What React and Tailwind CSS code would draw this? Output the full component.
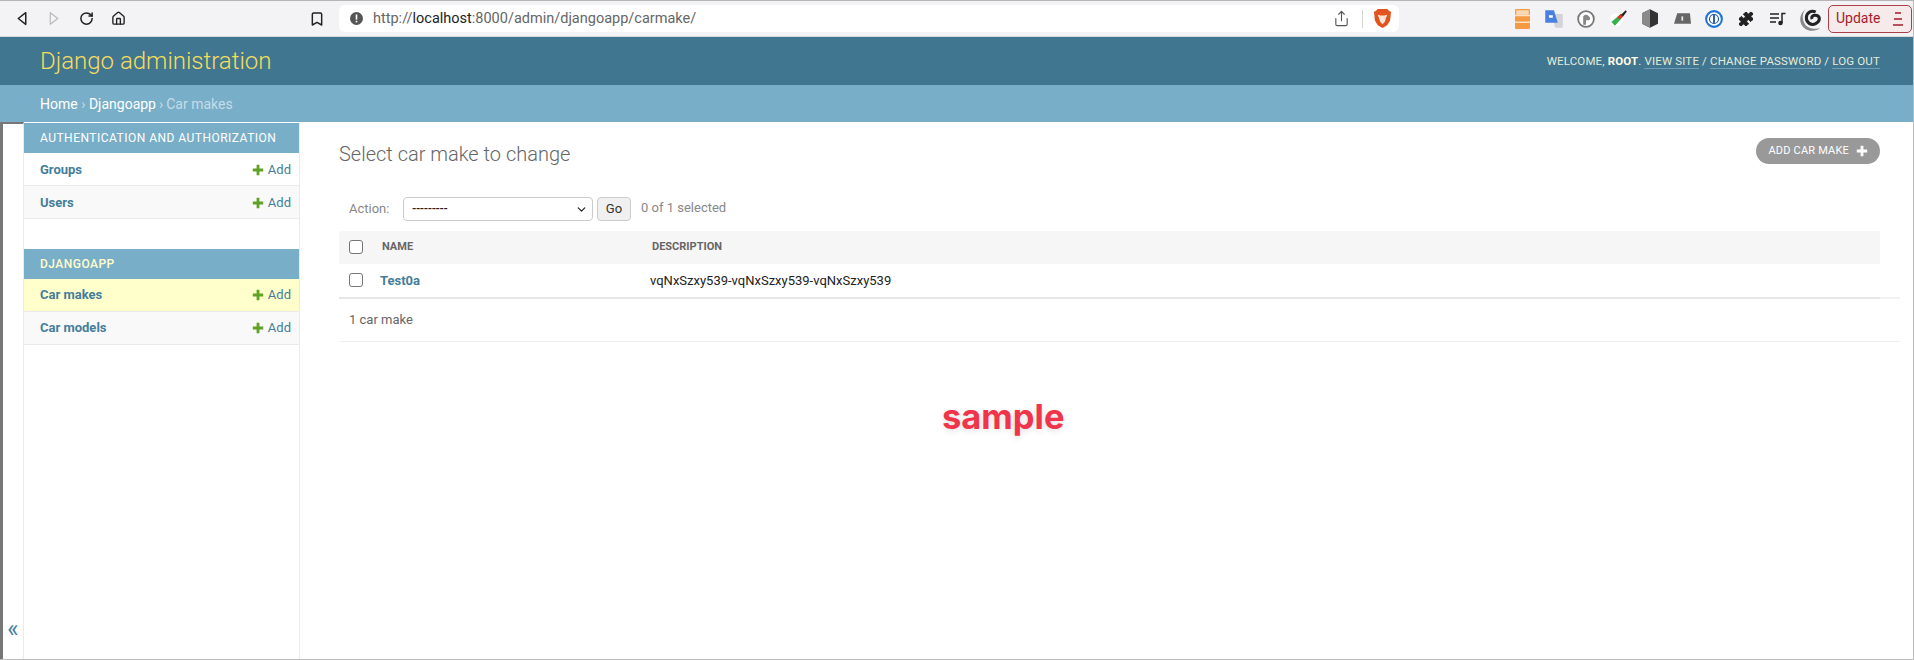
import { ChevronDown, Puzzle, Home, RotateCw, Bookmark, Share } from 'lucide-react';

const sections = [
  {
    title: 'Authentication and authorization',
    titleClass: 'text-white',
    rows: [
      { name: 'Groups', rowClass: 'bg-white pt-px' },
      { name: 'Users', rowClass: 'bg-[#f9f9f9] pt-px' },
    ],
  },
  {
    title: 'Djangoapp',
    titleClass: 'text-[#ffffcc] font-medium',
    rows: [
      { name: 'Car makes', rowClass: 'bg-[#ffffcc]' },
      { name: 'Car models', rowClass: 'bg-[#f9f9f9]' },
    ],
  },
];

const PlusIcon = ({ className }) => (
  <svg viewBox="0 0 12 12" className={className} fill="currentColor">
    <path d="M4.6 0.8h2.8v3.8h3.8v2.8H7.4v3.8H4.6V7.4H0.8V4.6h3.8z" />
  </svg>
);

const ToolbarSlot = ({ children }) => (
  <div className="flex h-[24px] w-[32px] shrink-0 items-center justify-center">{children}</div>
);

const BrowserBar = () => (
  <div className="flex h-[37px] shrink-0 items-center border-t border-b border-t-[#b5b5b5] border-b-[#d9d9d9] bg-[#f3f3f5] pl-[6px]">
    <ToolbarSlot>
      <svg viewBox="0 0 14 18" className="h-[15px] w-[12px]" fill="none" stroke="#222" strokeWidth="1.8" strokeLinejoin="round">
        <path d="M11.5 2L2.5 9l9 7z" />
      </svg>
    </ToolbarSlot>
    <ToolbarSlot>
      <svg viewBox="0 0 14 18" className="h-[15px] w-[12px]" fill="none" stroke="#b9b9b9" strokeWidth="1.4" strokeLinejoin="round">
        <path d="M2.5 2l9 7-9 7z" />
      </svg>
    </ToolbarSlot>
    <ToolbarSlot>
      <RotateCw className="h-[15px] w-[15px] text-[#222]" strokeWidth={2.4} />
    </ToolbarSlot>
    <ToolbarSlot>
      <Home className="h-[15px] w-[15px] text-[#222]" strokeWidth={2.2} />
    </ToolbarSlot>
    <div className="ml-[167px] flex w-[32px] justify-center">
      <Bookmark className="h-[16px] w-[16px] text-[#222]" strokeWidth={2.2} />
    </div>
    <div className="ml-[6px] flex h-[27px] w-[1060px] items-center rounded-[6px] bg-white pl-[11px]">
      <svg viewBox="0 0 16 16" className="h-[13px] w-[13px] shrink-0">
        <circle cx="8" cy="8" r="8" fill="#555" />
        <rect x="7" y="3" width="2" height="6.4" fill="#fff" />
        <rect x="7" y="10.8" width="2" height="2" fill="#fff" />
      </svg>
      <span className="ml-[10px] text-[14.5px] text-[#666]">
        http://<span className="text-[#222]">localhost</span>:8000/admin/djangoapp/carmake/
      </span>
      <div className="ml-auto flex items-center pr-[7px]">
        <Share className="h-[17px] w-[17px] text-[#555]" strokeWidth={1.6} />
        <div className="ml-[12px] h-[18px] w-px bg-[#d5d5d5]" />
        <svg viewBox="0 0 20 22" className="ml-[10px] h-[21px] w-[19px]">
          <path d="M5 1h10l2 2 2 1-1 9-3 5-5 3-5-3-3-5-1-9 2-1z" fill="#e2541f" />
          <path d="M5 7l3 .8h4l3-.8-1.500 4-1 3.500L10 17l-2.500-2.500-1-3.500z" fill="#fbe3d6" />
        </svg>
      </div>
    </div>
    <div className="ml-[107px] flex items-center">
      <ToolbarSlot>
        <svg viewBox="0 0 12 16" className="h-[20px] w-[15px]">
          <rect width="12" height="16" rx="1" fill="#f59a42" />
          <rect x="1" y="1" width="10" height="3.600" fill="#fcd9b6" />
          <rect y="4.600" width="12" height="1.200" fill="#ffe2c4" />
          <rect y="10" width="12" height="1.200" fill="#ffe2c4" />
        </svg>
      </ToolbarSlot>
      <ToolbarSlot>
        <svg viewBox="0 0 16 16" className="h-[22px] w-[20px]">
          <path d="M6 4h9v11H9z" fill="#d4d4d8" />
          <path d="M1 1h7l3 10H1z" fill="#4a80e0" />
          <rect x="4" y="5" width="3" height="2" fill="#fff" />
        </svg>
      </ToolbarSlot>
      <ToolbarSlot>
        <svg viewBox="0 0 16 16" className="h-[18px] w-[18px]">
          <circle cx="8" cy="8" r="7" fill="#fff" stroke="#777" strokeWidth="1.600" />
          <path d="M5.500 13V5.500Q8 3 10.500 5.500t0 3.500H8v4z" fill="#888" />
        </svg>
      </ToolbarSlot>
      <ToolbarSlot>
        <svg viewBox="0 0 16 16" className="h-[19px] w-[19px]">
          <circle cx="6" cy="9" r="5.500" fill="#fff" />
          <path d="M2 11L10 4l2 2-7 8z" fill="#35b04a" />
          <path d="M7 7l3-3 2 2-3 3z" fill="#d8352a" />
          <path d="M10 5l4-4 1 1-3 4z" fill="#222" />
        </svg>
      </ToolbarSlot>
      <ToolbarSlot>
        <svg viewBox="0 0 14 16" className="h-[19px] w-[16px]">
          <path d="M7 0l7 3.500v9L7 16 0 12.500v-9z" fill="#333" />
          <path d="M7 0L0 3.500v9L7 16z" fill="#8a8a8a" />
        </svg>
      </ToolbarSlot>
      <ToolbarSlot>
        <svg viewBox="0 0 16 10" className="h-[11px] w-[17px]">
          <path d="M3 0h12l1 10H0z" fill="#666" />
          <rect x="7" y="3" width="1.600" height="4" fill="#eee" />
        </svg>
      </ToolbarSlot>
      <ToolbarSlot>
        <svg viewBox="0 0 16 16" className="h-[18px] w-[18px]">
          <circle cx="8" cy="8" r="7" fill="#fff" stroke="#1a73d8" strokeWidth="1.800" />
          <circle cx="8" cy="8" r="4" fill="none" stroke="#1a4f9c" strokeWidth="1" />
          <rect x="7.200" y="4.500" width="1.600" height="7" fill="#1a4f9c" />
        </svg>
      </ToolbarSlot>
      <ToolbarSlot>
        <Puzzle className="h-[16px] w-[16px] fill-[#222] text-[#222]" strokeWidth={1.5} />
      </ToolbarSlot>
      <ToolbarSlot>
        <svg viewBox="0 0 16 14" className="h-[14px] w-[16px]" fill="none" stroke="#222" strokeWidth="1.500">
          <path d="M0 2h9M0 6h9M0 10h6" />
          <path d="M12 11V1.500h3.500" />
          <circle cx="10.500" cy="11" r="1.500" fill="#222" />
        </svg>
      </ToolbarSlot>
      <div className="flex h-[24px] w-[34px] shrink-0 items-center justify-center">
        <svg viewBox="0 0 24 24" className="h-[28px] w-[28px] shrink-0" fill="none">
          <path d="M8 3C1 8 1 17 8 21c4 2 9 1 12-1-6 1-12 0-14-5C4 10 5 6 8 3z" fill="#888" />
          <path d="M16 6c-4-2-8 1-8 5s4 7 8 5 4-6 1-7-5 1-4 3" stroke="#222" strokeWidth="2.600" />
        </svg>
      </div>
    </div>
    <div className="flex h-[28px] w-[84px] items-center justify-between rounded-[5px] border border-[#a8404a] bg-[#f7eaea] pr-[8px] pl-[7px]">
      <span className="text-[14px] text-[#a51d2d]">Update</span>
      <svg viewBox="0 0 10 14" className="h-[14px] w-[10px]" stroke="#a51d2d" strokeWidth="1.500">
        <path d="M2 1h6M1 7h8M0 13h10" />
      </svg>
    </div>
  </div>
);

const Sidebar = () => (
  <div className="flex w-[300px] shrink-0">
    <div className="flex w-[24px] shrink-0 items-end border-t-2 border-r border-l-[3px] border-t-[#777] border-r-[#eaeaea] border-l-[#777] pb-[18px]">
      <span className="w-full text-center text-[24px] leading-[24px] text-[#447e9b]">«</span>
    </div>
    <div className="w-[276px] border-r border-[#eaeaea] pt-px">
      {sections.map((section) => (
        <div key={section.title} className="mb-[30px]">
          <div className={`flex h-[30px] items-center bg-[#79aec8] pl-[16px] text-[12px] tracking-[0.48px] uppercase ${section.titleClass}`}>
            {section.title}
          </div>
          {section.rows.map((row) => (
            <div key={row.name} className={`flex h-[33px] items-center justify-between border-b border-[#eaeaea] pr-[8px] pl-[16px] text-[13px] ${row.rowClass}`}>
              <span className="font-bold text-[#447e9b]">{row.name}</span>
              <span className="flex items-center gap-[4px] text-[#447e9b]">
                <PlusIcon className="h-[12px] w-[12px] text-[#5fa225]" />
                Add
              </span>
            </div>
          ))}
        </div>
      ))}
    </div>
  </div>
);

const ChangeList = () => (
  <div className="relative min-w-0 flex-1 pt-[20px] pr-[13px] pl-[39px]">
    <div className="flex w-[1541px] items-start justify-between">
      <h1 className="text-[20px] leading-[24px] font-light text-[#666]">Select car make to change</h1>
      <div className="mt-[-4px] flex h-[26px] items-center gap-[7px] rounded-[13px] bg-[#999] pr-[12px] pl-[12px] text-[11px] tracking-[0.2px] text-white uppercase">
        Add car make
        <PlusIcon className="h-[12px] w-[12px]" />
      </div>
    </div>
    <div className="mt-[31px] flex h-[24px] items-center pl-[10px] text-[13px] text-[#666]">
      <span className="w-[54px] text-[#888]">Action:</span>
      <div className="flex h-[24px] w-[190px] items-center justify-between rounded-[4px] border border-[#ccc] bg-white pr-[4px] pl-[8px] text-[#222]">
        <span className="text-[11px] font-bold tracking-[-0.4px]">---------</span>
        <ChevronDown className="h-[13px] w-[13px] text-[#222]" strokeWidth={2.2} />
      </div>
      <div className="ml-[4px] flex h-[24px] w-[34px] items-center justify-center rounded-[4px] border border-[#ccc] bg-[#f0f0f0] text-[13px] text-[#333]">Go</div>
      <span className="ml-[10px] mb-[2px] text-[#888]">0 of 1 selected</span>
    </div>
    <div className="mt-[10px] flex h-[33px] w-[1541px] items-center bg-[#f6f6f6] text-[11px] font-bold text-[#666] uppercase">
      <div className="mb-[2px] ml-[10px] h-[14px] w-[14px] rounded-[3px] border border-[#767676] bg-white" />
      <span className="ml-[19px] w-[270px]">Name</span>
      <span>Description</span>
    </div>
    <div className="border-b-2 border-[#f2f2f2]">
      <div className="-mb-[2px] flex h-[35px] w-[1541px] items-center border-b-2 border-[#e6e6e6] text-[13px] text-[#222]">
        <div className="mb-[2px] ml-[10px] h-[14px] w-[14px] rounded-[3px] border border-[#767676] bg-white" />
        <span className="ml-[17px] w-[270px] font-bold text-[#447e9b]">Test0a</span>
        <span>vqNxSzxy539-vqNxSzxy539-vqNxSzxy539</span>
      </div>
    </div>
    <div className="flex h-[43px] items-center border-b border-[#eee] pl-[10px] text-[13px] text-[#666]">1 car make</div>
    <span className="absolute top-[273px] left-[642px] font-['Inter'] text-[34.5px] leading-[44px] font-bold text-[#f0354a] [text-shadow:0_2px_6px_rgba(0,0,0,0.12)]">
      sample
    </span>
  </div>
);

export default function App() {
  return (
    <div className="flex h-[660px] flex-col overflow-hidden border-r border-b border-[#bbb] bg-white font-['Roboto',sans-serif]">
      <BrowserBar />
      <div className="flex h-[48px] shrink-0 items-center justify-between bg-[#417690] pr-[33px] pl-[40px]">
        <span className="text-[24px] font-light text-[#f5dd5d]">Django administration</span>
        <div className="mt-[2px] text-[11.5px] tracking-[0.15px] text-[#e3ecd9] uppercase">
          Welcome, <span className="font-bold text-[#ffffe8]">root</span>.{' '}
          <span className="border-b border-[#6f9db5]">View site</span> /{' '}
          <span className="border-b border-[#6f9db5]">Change password</span> /{' '}
          <span className="border-b border-[#6f9db5]">Log out</span>
        </div>
      </div>
      <div className="flex h-[37px] shrink-0 items-center bg-[#79aec8] pt-px pl-[40px] text-[14px] text-white">
        Home <span className="mx-[3.5px] text-[#c4dce8]">›</span> Djangoapp <span className="mx-[3px] text-[#c4dce8]">›</span>
        <span className="text-[#c4dce8]">Car makes</span>
      </div>
      <div className="flex min-h-0 flex-1">
        <Sidebar />
        <ChangeList />
      </div>
    </div>
  );
}
